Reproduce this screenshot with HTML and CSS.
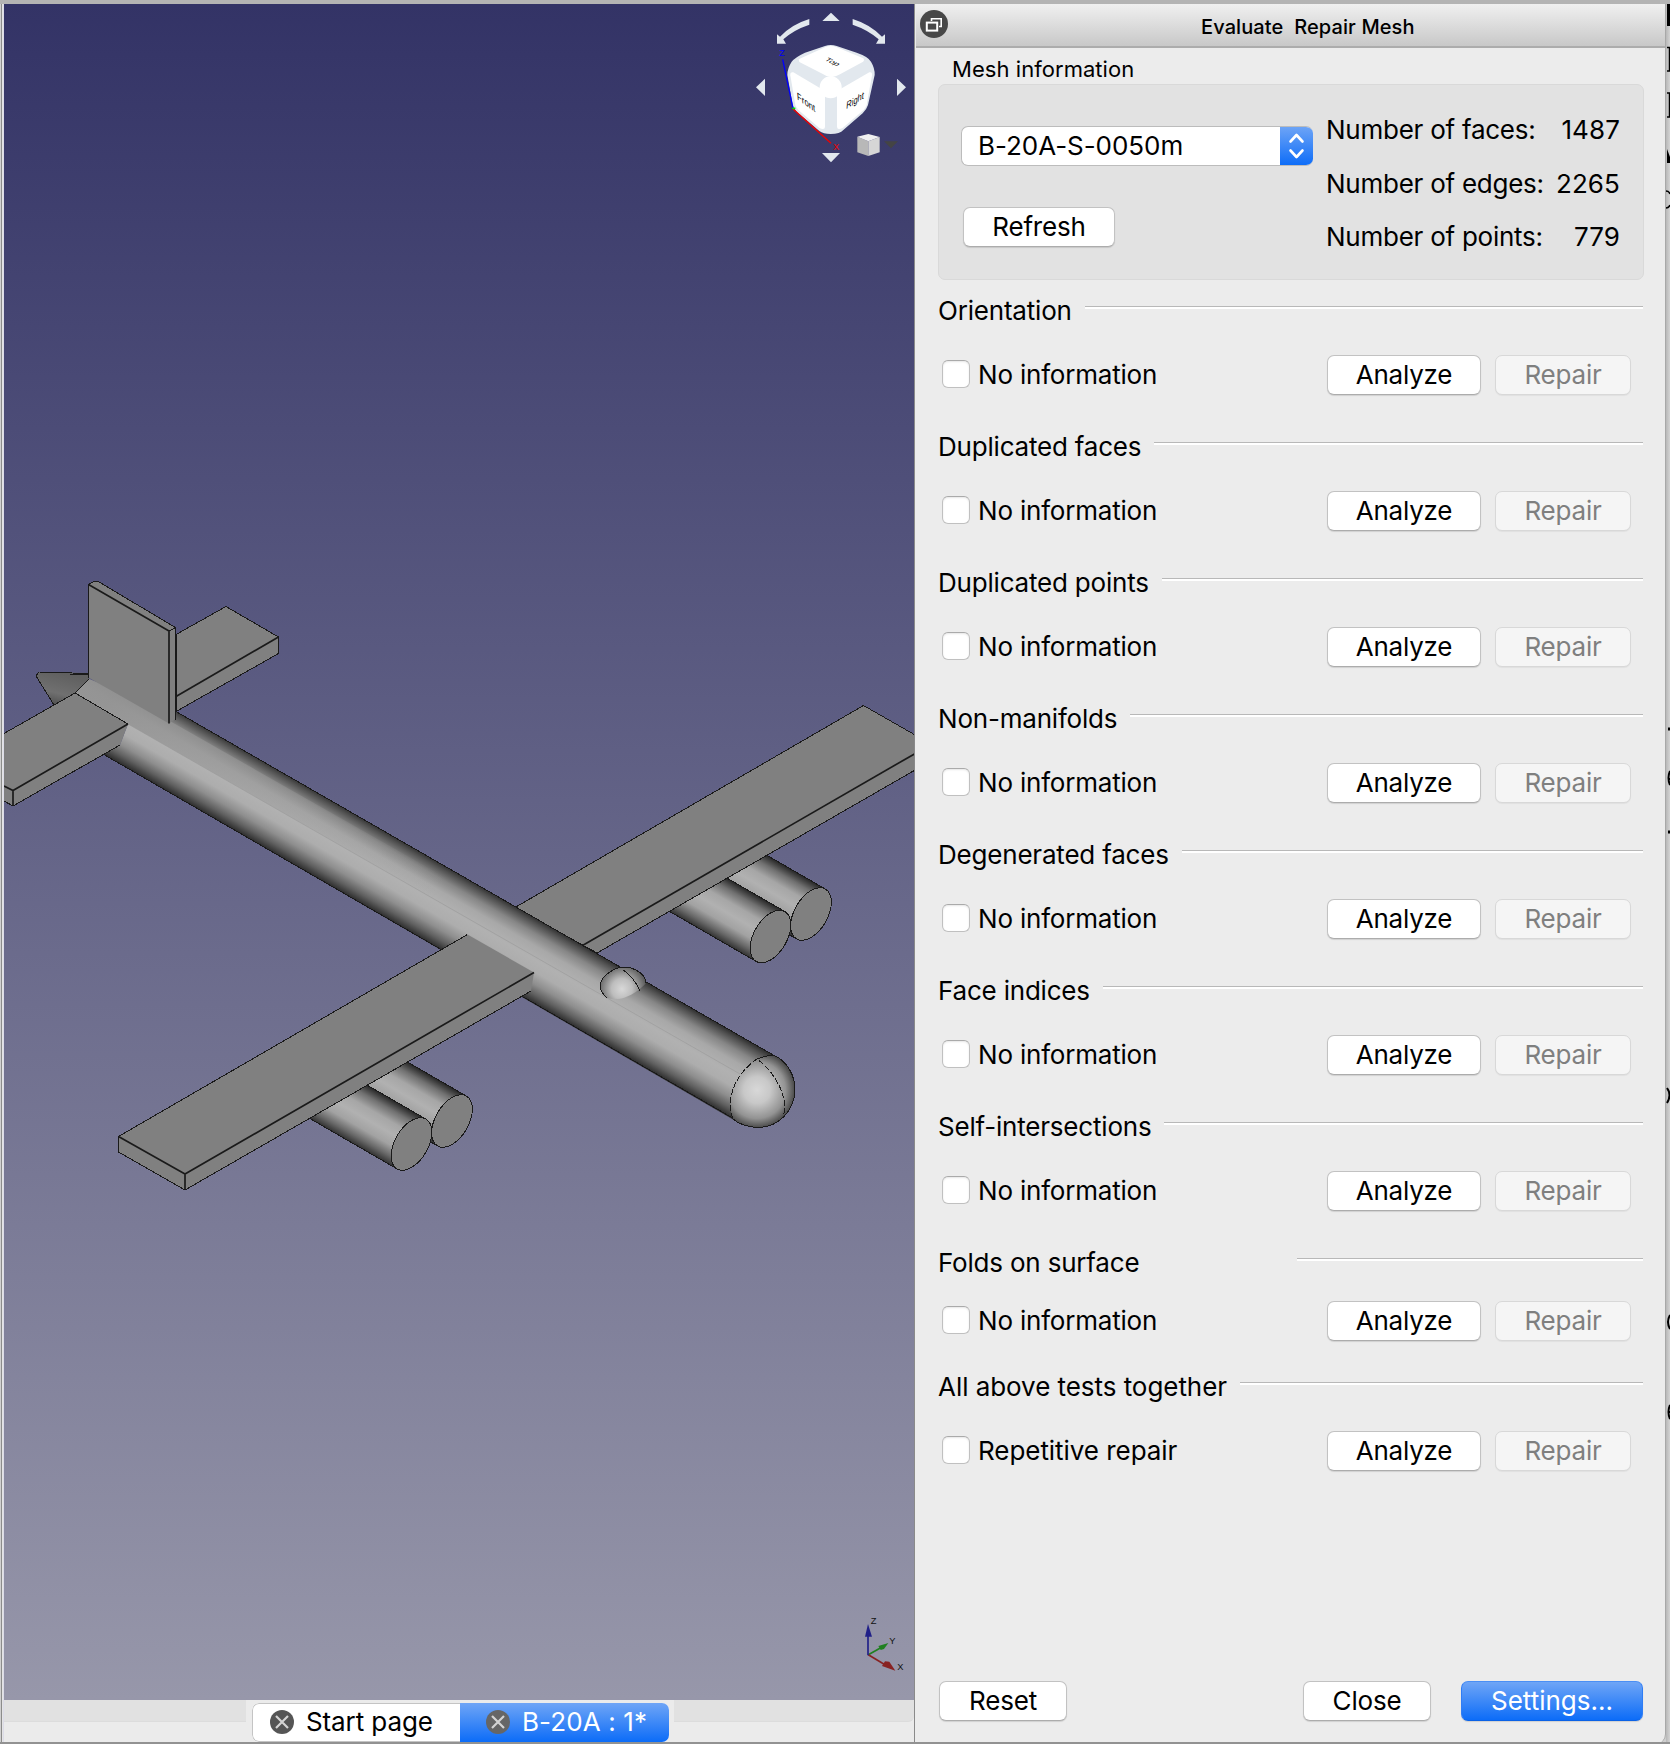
FILE: index.html
```html
<!DOCTYPE html>
<html lang="en">
<head>
<meta charset="utf-8">
<title>Evaluate &amp; Repair Mesh</title>
<link rel="stylesheet" href="styles.css">
</head>
<body>
<div class="window">
  <div class="left-edge"></div>
  <main class="workspace">
    <svg class="scene" width="911" height="1696" viewBox="4 4 911 1696">
      <defs>
        <linearGradient id="sky" x1="0" y1="0" x2="0" y2="1"><stop offset="0" stop-color="#333366"/><stop offset="1" stop-color="#9797aa"/></linearGradient>
        <linearGradient id="body" gradientUnits="userSpaceOnUse" x1="736" y1="1120" x2="774" y2="1054.4">
          <stop offset="0" stop-color="#303030"/><stop offset=".1" stop-color="#606060"/><stop offset=".22" stop-color="#8e8e8e"/><stop offset=".36" stop-color="#adadad"/><stop offset=".5" stop-color="#b1b1b1"/><stop offset=".66" stop-color="#a8a8a8"/><stop offset=".8" stop-color="#868686"/><stop offset=".92" stop-color="#505050"/><stop offset="1" stop-color="#262626"/>
        </linearGradient>
        <linearGradient id="tail" gradientUnits="userSpaceOnUse" x1="110" y1="700" x2="440" y2="890"><stop offset="0" stop-color="#929292" stop-opacity=".9"/><stop offset="1" stop-color="#a0a0a0" stop-opacity="0"/></linearGradient>
        <linearGradient id="pod" gradientUnits="userSpaceOnUse" x1="-14.4" y1="24.9" x2="14.4" y2="-24.9">
          <stop offset="0" stop-color="#333"/><stop offset=".13" stop-color="#686868"/><stop offset=".3" stop-color="#a2a2a2"/><stop offset=".48" stop-color="#b1b1b1"/><stop offset=".66" stop-color="#a6a6a6"/><stop offset=".84" stop-color="#707070"/><stop offset="1" stop-color="#262626"/>
        </linearGradient>
        <radialGradient id="nose" gradientUnits="userSpaceOnUse" cx="757" cy="1090" r="38"><stop offset="0" stop-color="#d8d8d8"/><stop offset=".35" stop-color="#c8c8c8"/><stop offset=".75" stop-color="#939393"/><stop offset="1" stop-color="#484848"/></radialGradient>
        <radialGradient id="dome" gradientUnits="userSpaceOnUse" cx="622" cy="989" r="26"><stop offset="0" stop-color="#d8d8d8"/><stop offset=".4" stop-color="#bdbdbd"/><stop offset="1" stop-color="#505050"/></radialGradient>
        <linearGradient id="cone" x1="0" y1="1" x2=".4" y2="0"><stop offset="0" stop-color="#444"/><stop offset=".45" stop-color="#707070"/><stop offset="1" stop-color="#606060"/></linearGradient>
        <g id="engine">
          <path d="M14.4-24.9L-75.6-76.9L-104.4-27.1L-14.4 24.9z" fill="url(#pod)"/>
          <path class="edge" d="M14.4-24.9L-75.6-76.9M-104.4-27.1L-14.4 24.9"/>
          <ellipse class="plate" rx="16.6" ry="28.8" transform="rotate(30)"/>
        </g>
      </defs>
      <rect x="4" y="4" width="911" height="1696" fill="url(#sky)"/>

      <!-- tail cone and far stabilizer -->
      <path d="M36 676L39 672L89 673V681L75 693L54 705z" fill="url(#cone)"/>
      <path class="edge" d="M54 705L36 676L39 672L89 673.500M70 674.500L89 675"/>
      <path class="plate" d="M226 606.500L278.500 637V653.500L176 711.500V634.500z"/>
      <path class="crease" d="M278.500 637L176 696.500"/>

      <!-- far wing with its engines -->
      <use href="#engine" transform="translate(811,914)"/>
      <use href="#engine" transform="translate(770.5,936.500)"/>
      <path class="plate" d="M916 735.500L863.500 705.500L515 907.500L597 953L916 769.500z"/>
      <path class="crease" d="M916 753L582.500 945.500"/>

      <!-- fuselage -->
      <path d="M75 693L89 679L175 711L774 1055.500L733 1119.500L103 754L120 745L128 724z" fill="url(#body)"/>
      <path d="M128 724L740 1074" stroke="#a2a2a2" fill="none"/>
      <path d="M89 679L75 693L128 724L440 902L460 886L168 720z" fill="url(#tail)"/>
      <path class="edge" d="M175 711L774 1055.500M103 754L736 1120"/>
      <path class="edge" d="M75 693L89 679"/>

      <!-- fin -->
      <path class="face" d="M88.500 584.500L94 581.500L99 582L175 627.500V719.500L169 723.500L88.500 677.500z"/>
      <path class="edge" d="M88.500 678V584.500L94 581.500L99 582L175.500 627.500V719.500M169 631L175.500 627.500"/>
      <path class="crease" d="M88.500 584.500L169 631V723.500"/>

      <!-- near stabilizer -->
      <path class="face" d="M4 733.500L75 693L128 724L120 745L13 806L4 801z"/>
      <path class="edge" d="M4 733.500L75 693L128 724M120 745L13 806L4 801"/>
      <path class="crease" d="M4 786L13 790.500L128 724M13 790V806"/>

      <!-- near wing with its engines -->
      <use href="#engine" transform="translate(452,1121)"/>
      <use href="#engine" transform="translate(411.5,1144)"/>
      <path class="face" d="M118.500 1136.500L467.500 934.500L534 972.500L531 991L185 1190L118.500 1152z"/>
      <path class="edge" d="M467.500 934.500L118.500 1136.500V1152L185 1190L531 991"/>
      <path class="crease" d="M118.500 1136.500L185 1174L534 972.500M185 1174V1190"/>

      <!-- canopy dome -->
      <path d="M607 998C598 990 599 982 605 976C615 966 627 965 636 970C643 974 646 979 646 983C640 990 624 1003 607 998z" fill="url(#dome)"/>
      <path class="edge" d="M607 998C598 990 599 982 605 976C615 966 627 965 636 970C643 974 646 979 646 983M623 970Q633 976 640 991"/>

      <!-- nose -->
      <path d="M757 1059C765 1056 770 1055 774 1055.500C787 1061 795 1075 795 1090C794 1112 778 1127.500 757 1127.500C749 1127 740 1125 733 1119C727 1104 730 1078 757 1059z" fill="url(#nose)"/>
      <path class="edge" d="M757 1059C765 1056 770 1055 774 1055.500C787 1061 795 1075 795 1090C794 1112 778 1127.500 757 1127.500C749 1127 740 1125 733 1119"/>
      <path class="edge dashed" d="M733 1119C727 1104 730 1078 757 1059C773 1070 790 1097 783 1117"/>

      <!-- navigation cube -->
      <g transform="translate(740,0) scale(.33333)">
        <g fill="#e2e8ee">
          <path d="M273 38L299 63H247zM246 459H300L273 487zM48 262L75 236V288zM498 262L471 236V288z"/>
          <path d="M208 57V74Q160 90 130 118L138 131H111V103L120 110Q155 73 208 57zM338 57V74Q385 90 416 118L408 131H435V103L426 110Q390 73 338 57z"/>
          <path d="M255 138Q272 132 290 138L350 158Q385 170 393 185Q405 205 404 225L384 315Q380 328 368 340L310 390Q300 402 272 402Q250 402 238 393L170 335Q160 325 158 315L142 225Q142 205 155 185Q165 172 195 158z"/>
        </g>
        <g fill="#fff">
          <path d="M176 178L255 142Q272 134 290 142L370 175Q375 182 368 186L300 223Q272 240 250 223L178 186z"/>
          <path d="M160 217Q150 215 151 226L166 315Q168 322 175 330L238 384Q255 392 255 380V285Q255 275 246 268z"/>
          <path d="M388 217Q397 215 396 226L380 315Q378 322 371 330L308 384Q291 392 291 380V285Q291 275 300 268z"/>
          <circle cx="272" cy="262" r="33"/>
        </g>
        <path d="M128 178L159 325" stroke="#0000ff" stroke-width="4"/>
        <path d="M159 327L273 430" stroke="#f00000" stroke-width="4"/>
        <path d="M157 325h9" stroke="#00e000" stroke-width="5"/>
        <text x="118" y="167" font-size="27" fill="#0000ff">Z</text>
        <text x="280" y="450" font-size="27" fill="#f00000">X</text>
        <text class="cube-label" transform="matrix(.9,.42,-.7,.4,252,180)">Top</text>
        <text class="cube-label" transform="matrix(.86,.62,.1,1.15,172,298)">Front</text>
        <text class="cube-label" transform="matrix(.84,-.52,-.1,1.15,318,328)">Right</text>
        <path d="M352 410L385 424V468L352 457z" fill="#b8b8b8"/>
        <path d="M419 411L385 424V468L419 457z" fill="#d6d6d6"/>
        <path d="M352 410L385 402L419 411L385 424z" fill="#f0f0f0"/>
        <path d="M432 424H474L453 445z" fill="#444"/>
      </g>

      <!-- axis cross -->
      <g transform="translate(840,1600) scale(.33333)" stroke-width="5">
        <path d="M85 164L125 142" stroke="#208020"/><path d="M145 129L115 138L122 150L132 147z" fill="#208020"/>
        <path d="M85 164L135 194" stroke="#882222"/><path d="M166 212L148 185L135 184L126 198z" fill="#882222"/>
        <path d="M84 166V108" stroke="#202088"/><path d="M84 72L75 110H96z" fill="#202088"/>
        <g font-size="28" fill="#111"><text x="92" y="71">Z</text><text x="148" y="131">Y</text><text x="172" y="209">X</text></g>
      </g>
    </svg>
    <nav class="tabbar">
      <div class="strip strip-left"></div>
      <div class="tabs">
        <div class="tab"><svg class="tab-close" width="24" height="24" viewBox="0 0 24 24"><circle cx="12" cy="12" r="12" fill="#555"/><path d="M6 6L18 18M18 6L6 18" stroke="#d4d4d4" stroke-width="2.200"/></svg><span>Start page</span></div>
        <div class="tab tab-active"><svg class="tab-close" width="24" height="24" viewBox="0 0 24 24"><circle cx="12" cy="12" r="12" fill="#666"/><path d="M6 6L18 18M18 6L6 18" stroke="#d4d4d4" stroke-width="2.200"/></svg><span>B-20A : 1*</span></div>
      </div>
      <div class="strip strip-right"></div>
    </nav>
  </main>

  <aside class="panel">
    <header class="titlebar">
      <svg class="float-icon" width="28" height="28" viewBox="0 0 28 28"><circle cx="14" cy="14" r="14" fill="#484848"/><path d="M11.500 11V8.800H21.200V16.500H19" fill="none" stroke="#fff" stroke-width="1.600"/><rect x="6.800" y="12.600" width="10.400" height="8" fill="#484848" stroke="#fff" stroke-width="2"/></svg>
      <h1 class="title">Evaluate&nbsp; Repair Mesh</h1>
    </header>
    <div class="group-label">Mesh information</div>
    <section class="group">
      <div class="group-controls">
        <div class="combo"><span class="combo-text">B-20A-S-0050m</span><span class="combo-arrows"><svg width="33" height="40" viewBox="0 0 33 40"><path d="M10.500 15.500L16.500 9L22.500 15.500M10.500 24.500L16.500 31L22.500 24.500" fill="none" stroke="#fff" stroke-width="2.600" stroke-linecap="round" stroke-linejoin="round"/></svg></span></div>
        <button class="btn refresh">Refresh</button>
      </div>
      <dl class="stats">
        <div class="stat"><dt>Number of faces:</dt><dd>1487</dd></div>
        <div class="stat"><dt>Number of edges:</dt><dd>2265</dd></div>
        <div class="stat"><dt>Number of points:</dt><dd>779</dd></div>
      </dl>
    </section>

    <section class="check"><h2><span>Orientation</span><i class="rule"></i></h2><div class="row"><label><i class="box"></i><span>No information</span></label><button class="btn analyze">Analyze</button><button class="btn repair">Repair</button></div></section>
    <section class="check"><h2><span>Duplicated faces</span><i class="rule"></i></h2><div class="row"><label><i class="box"></i><span>No information</span></label><button class="btn analyze">Analyze</button><button class="btn repair">Repair</button></div></section>
    <section class="check"><h2><span>Duplicated points</span><i class="rule"></i></h2><div class="row"><label><i class="box"></i><span>No information</span></label><button class="btn analyze">Analyze</button><button class="btn repair">Repair</button></div></section>
    <section class="check"><h2><span>Non-manifolds</span><i class="rule"></i></h2><div class="row"><label><i class="box"></i><span>No information</span></label><button class="btn analyze">Analyze</button><button class="btn repair">Repair</button></div></section>
    <section class="check"><h2><span>Degenerated faces</span><i class="rule"></i></h2><div class="row"><label><i class="box"></i><span>No information</span></label><button class="btn analyze">Analyze</button><button class="btn repair">Repair</button></div></section>
    <section class="check"><h2><span>Face indices</span><i class="rule"></i></h2><div class="row"><label><i class="box"></i><span>No information</span></label><button class="btn analyze">Analyze</button><button class="btn repair">Repair</button></div></section>
    <section class="check"><h2><span>Self-intersections</span><i class="rule"></i></h2><div class="row"><label><i class="box"></i><span>No information</span></label><button class="btn analyze">Analyze</button><button class="btn repair">Repair</button></div></section>
    <section class="check check-folds"><h2><span>Folds on surface</span><i class="rule"></i></h2><div class="row"><label><i class="box"></i><span>No information</span></label><button class="btn analyze">Analyze</button><button class="btn repair">Repair</button></div></section>
    <section class="check check-all"><h2><span>All above tests together</span><i class="rule"></i></h2><div class="row"><label><i class="box"></i><span>Repetitive repair</span></label><button class="btn analyze">Analyze</button><button class="btn repair">Repair</button></div></section>

    <footer class="actions">
      <button class="btn small">Reset</button>
      <button class="btn small close">Close</button>
      <button class="btn primary">Settings...</button>
    </footer>
  </aside>

  <svg class="behind" width="4" height="1744" viewBox="0 0 4 1744">
    <path d="M1 2h3v24h-3zM1 163l3 0v-6l-3-8z" fill="#000"/>
    <path d="M1 47.500h2.500V71H1M1 93h2.500v24H1M0 191q3 0 4 3M0 208q3 0 4-3" fill="none" stroke="#000" stroke-width="1.500"/>
    <path d="M2 729h2M2 832h2" stroke="#000" stroke-width="3"/>
    <path d="M4 771q-3 7 0 14M4 779H2M1 1088q5 7 0 15M4 1315q-4 7 0 14M4 1405q-3 7 0 14M4 1412H2" fill="none" stroke="#000" stroke-width="2"/>
  </svg>
</div>
</body>
</html>
```
FILE: styles.css
```css
* { box-sizing: border-box; }
body { margin: 0; background: #cfcfcf; font-family: Inter, "Liberation Sans", sans-serif; font-size: 26px; font-weight: 400; letter-spacing: -.2px; color: #000; }
h1, h2, dl, dd { margin: 0; font-weight: inherit; }
.window {
  display: grid; grid-template-columns: 4px 911px 751px 4px;
  width: 1670px; height: 1744px; overflow: hidden;
  border-top: 4px solid #b4b4b4; border-bottom: 2px solid #929292;
}
.left-edge { background: #e4e4e4; border-left: 1px solid #d0d0d0; border-right: 1px solid #dcdce8; box-shadow: inset 1px 0 #8c8c8c; }

/* 3D view */
.workspace { display: flex; flex-direction: column; border-right: 1px solid #8a8a8a; background: #ebebeb; min-width: 0; overflow: hidden; }
.scene { display: block; flex: none; font-family: "Liberation Sans", sans-serif; letter-spacing: 0; }
.scene .plate { fill: #808080; stroke: #1a1a1a; stroke-width: 1; shape-rendering: crispEdges; }
.scene .face { fill: #808080; }
.scene .edge { fill: none; stroke: #1a1a1a; stroke-width: 1; shape-rendering: crispEdges; }
.scene .crease { fill: none; stroke: #1a1a1a; stroke-width: 1.700; }
.scene .dashed { stroke-dasharray: 6 2; }
.cube-label { font-size: 27px; fill: #000; }

/* document tabs */
.tabbar { display: flex; height: 42px; }
.strip { height: 22px; background: #e1e1e1; border-bottom: 1px solid #dcdcdc; }
.strip-left { width: 242px; }
.strip-right { flex: 1; border-bottom-right-radius: 6px; }
.tabs { display: flex; margin: 3px 5px 0 6px; width: 417px; height: 39px; border-radius: 7px; overflow: hidden; background: #fff; }
.tab { display: flex; align-items: center; gap: 12px; width: 208px; padding: 0 0 2px 17px; border: 1px solid #c4c4c4; border-right: 0; border-radius: 7px 0 0 7px; letter-spacing: -.1px; white-space: pre; }
.tab-active { width: 209px; border: 0; border-radius: 0; padding-left: 26px; background: linear-gradient(#6fa5f6, #0c6cf8); color: #fff; letter-spacing: .1px; }

/* dock panel */
.panel { display: flex; flex-direction: column; background: #ececec; border-right: 1px solid #a8a8a8; border-bottom-right-radius: 10px; }
.titlebar { display: flex; align-items: center; height: 44px; margin-left: 1px; background: linear-gradient(#f0f0f0, #c8c8c8); border-bottom: 2px solid #acacac; padding-left: 4px; }
.float-icon { margin-top: -3px; }
.title { margin-left: 253px; padding-top: 4px; font-size: 20px; font-weight: 500; letter-spacing: .1px; white-space: pre; }
.group-label { height: 36px; padding: 7px 0 0 37px; font-size: 22px; letter-spacing: .05px; line-height: 28px; }
.group { display: flex; width: 706px; height: 196px; margin-left: 23px; padding: 41px 23px 0 22px; background: #e2e2e2; border: 1px solid #d9d9d9; border-radius: 7px; }
.group-controls { width: 365px; }
.combo { display: flex; width: 352px; height: 40px; border-radius: 7px; overflow: hidden; background: #fff; border: 1px solid #bcbcbc; border-right: 0; }
.combo-text { flex: 1; padding-left: 16px; line-height: 38px; letter-spacing: -.05px; }
.combo-arrows { width: 33px; margin: -1px 0; background: linear-gradient(#6fa5f6, #0c6cf8); }
.stats { flex: 1; margin-top: -13px; }
.stat { display: flex; justify-content: space-between; height: 53.500px; line-height: 34px; letter-spacing: -.25px; }
.stat dd { letter-spacing: .1px; }

.btn { flex: none; height: 40px; padding: 0 0 2px; font: inherit; letter-spacing: -.2px; color: #000; background: #fff; border: 1px solid #c2c2c2; border-bottom-color: #acacac; border-radius: 7px; box-shadow: 0 1px 1px rgba(0,0,0,.12); text-align: center; }
.refresh { display: block; width: 152px; margin: 41px 0 0 2px; }
.analyze { width: 154px; }
.repair { width: 136px; margin-left: 14px; color: #7f7f7f; background: #f5f5f5; border-color: #d8d8d8; box-shadow: 0 1px 1px rgba(0,0,0,.05); }

.check { height: 136px; padding: 0 22px 0 23px; }
.group + .check { margin-top: 15px; }
.check h2 { display: flex; height: 32px; font-size: 26px; line-height: 32px; }
.rule { flex: 1; height: 3px; margin: 11px 0 0 13px; background: #fff; border-top: 1px solid #b8b8b8; }
.row { display: flex; margin-top: 28px; padding-right: 12px; }
.row label { flex: 1; display: flex; align-items: center; gap: 8px; padding: 0 0 2px 4px; }
.box { width: 28px; height: 28px; margin-top: -1px; background: #fff; border: 1px solid #c0c0c0; border-top-color: #aaa; border-radius: 6px; box-shadow: inset 0 1px 2px rgba(0,0,0,.1); }
.check-folds { height: 124px; }
.check-folds .row { margin-top: 22px; }
.check-folds .rule { flex: none; width: 346px; margin-left: auto; }
.check-all { letter-spacing: -.05px; }

.actions { display: flex; margin: auto 22px 23px 24px; }
.small { width: 128px; }
.close { margin-left: auto; }
.primary { width: 182px; margin-left: 30px; color: #fff; border-color: #4a8ff5 #2f7df5 #0b62e6; background: linear-gradient(#6fa5f6, #0c6cf8); letter-spacing: 0; }
.behind { display: block; margin-top: -4px; background: linear-gradient(90deg, #b8b8b8, #d4d4d4); }
```
